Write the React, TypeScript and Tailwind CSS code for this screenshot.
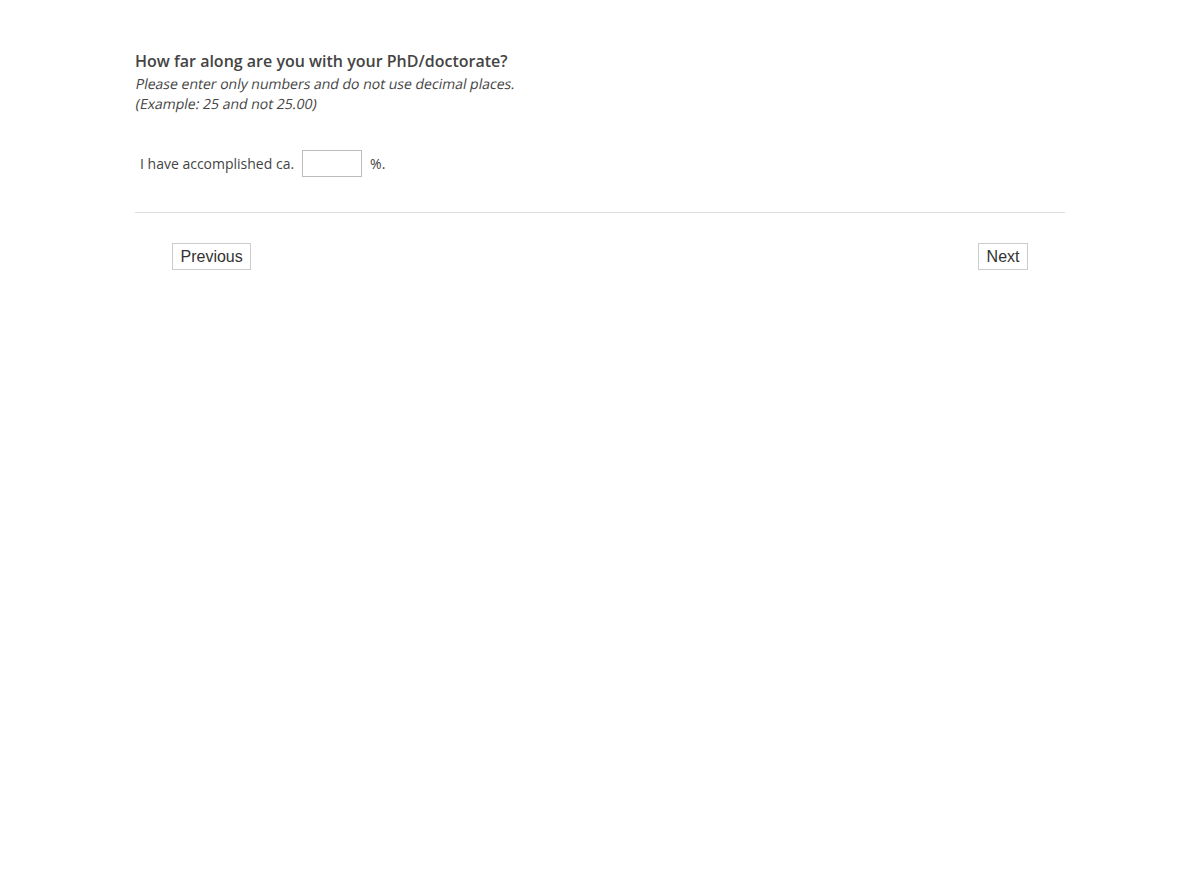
export default function App() {
  return (
    <div className="min-h-[882px] bg-white font-['Open_Sans',sans-serif] text-[#444]">
      <div className="mx-auto w-[930px] pt-[50px]">
        <div className="text-[16px] font-semibold leading-[22px] text-[#444]">
          How far along are you with your PhD/doctorate?
        </div>
        <div className="mt-[2px] text-[14px] leading-[20px] text-[#444]">
          <div className="origin-[0_75%] -skew-x-[11deg]">
            Please enter only numbers and do not use decimal places.
          </div>
          <div className="origin-[0_75%] -skew-x-[11deg]">(Example: 25 and not 25.00)</div>
        </div>

        <div className="mt-[36px] flex items-center pl-[5px] text-[14px]">
          <span>I have accomplished ca.</span>
          <input
            type="text"
            className="ml-[8px] h-[27px] w-[60px] border border-[#bbb] bg-white px-1 outline-none"
          />
          <span className="ml-[8px]">%.</span>
        </div>

        <div className="mt-[35px] border-t border-[#ddd]" />

        <div className="flex justify-between px-[37px] pt-[30px]">
          <button
            type="button"
            className="h-[27px] border border-[#ccc] bg-white px-[7.5px] font-['Liberation_Sans',Arial,sans-serif] text-[16px] text-[#333]"
          >
            Previous
          </button>
          <button
            type="button"
            className="h-[27px] border border-[#ccc] bg-white px-[7.5px] font-['Liberation_Sans',Arial,sans-serif] text-[16px] text-[#333]"
          >
            Next
          </button>
        </div>
      </div>
    </div>
  );
}
